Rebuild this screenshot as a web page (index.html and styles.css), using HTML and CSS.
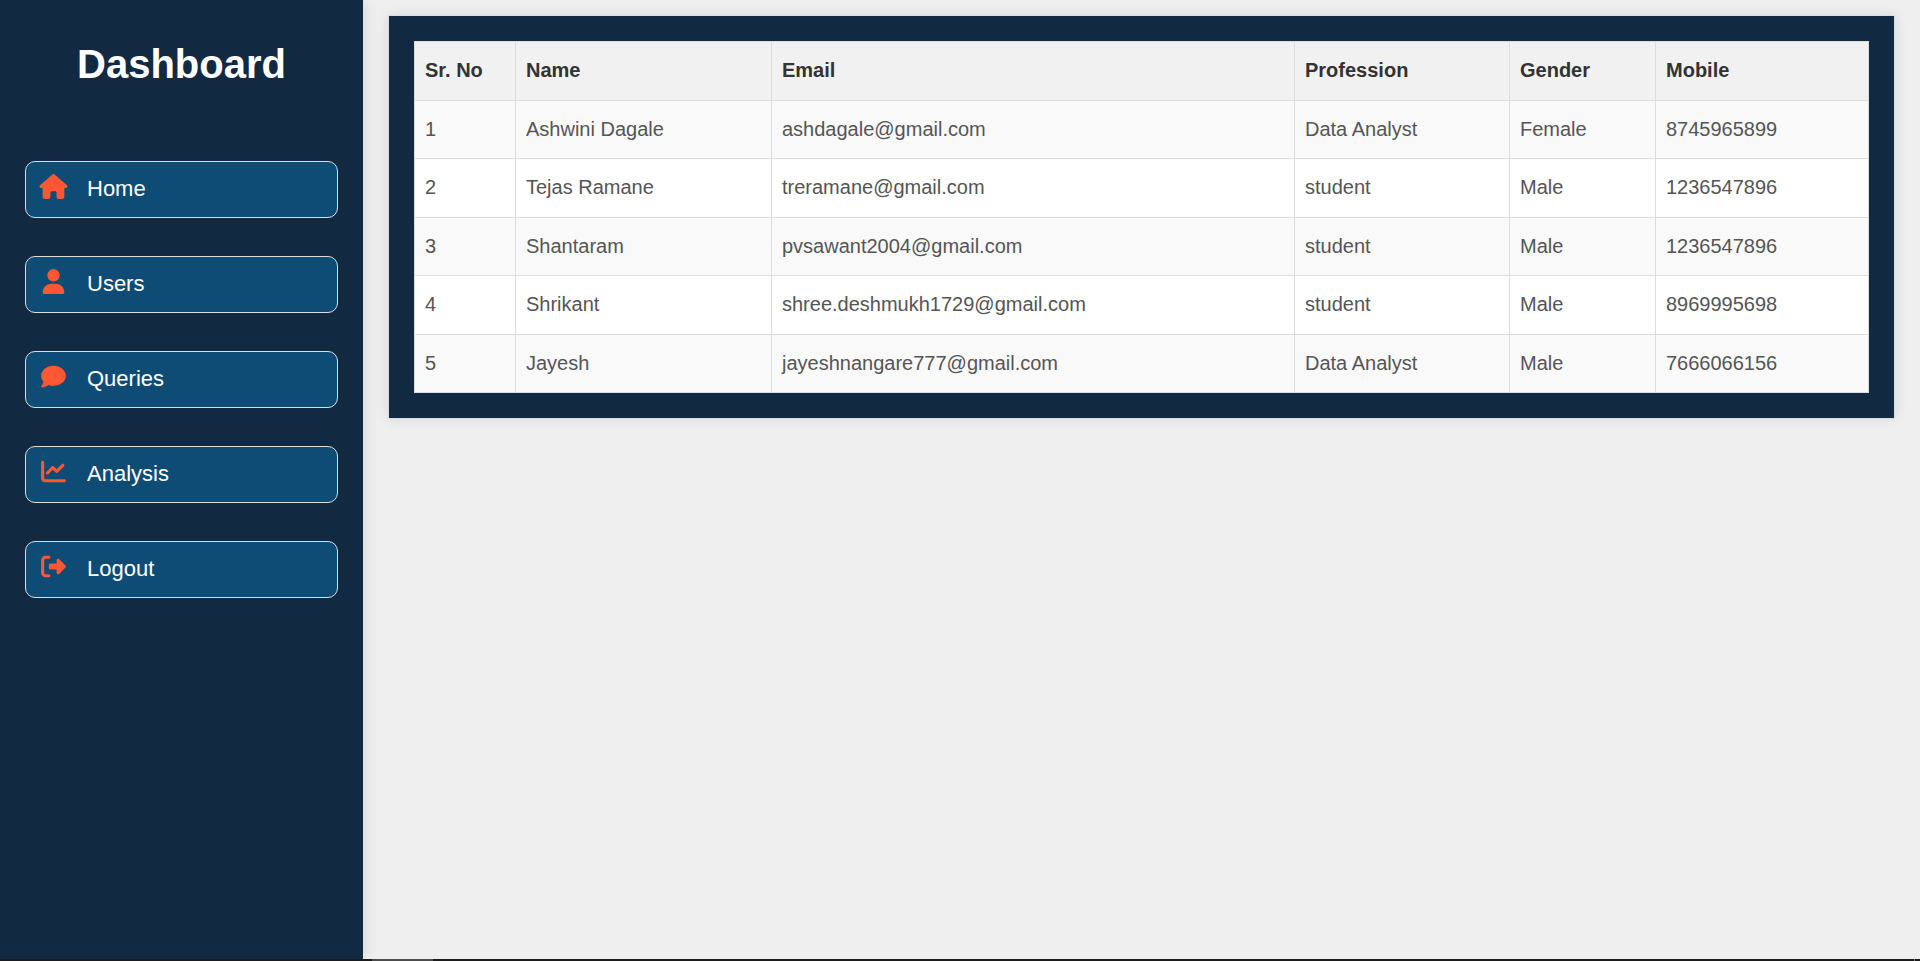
FILE: index.html
```html
<!DOCTYPE html>
<html lang="en">
<head>
<meta charset="utf-8">
<title>Dashboard</title>
<link rel="stylesheet" href="styles.css">
</head>
<body>
<div class="app">
  <aside class="sidebar">
    <h1 class="title">Dashboard</h1>
    <nav class="menu">
      <a class="item" href="#home"><svg class="icon" viewBox="-32 0 640 512" aria-hidden="true"><path d="M575.800 255.500c0 18-15 32.100-32 32.100h-32l.7 160.200c0 2.700-.2 5.400-.5 8.100V472c0 22.100-17.900 40-40 40H392c-22.100 0-40-17.900-40-40v-88c0-17.700-14.300-32-32-32h-64c-17.700 0-32 14.300-32 32v88c0 22.100-17.900 40-40 40h-80c-22.100 0-40-17.900-40-40V287.600H32c-18 0-32-14-32-32.100 0-9 3-17 10-24L266.400 8c7-7 15-8 22-8s15 2 21 7l255.400 224.500c8 7 12 15 11 24z"/></svg>Home</a>
      <a class="item" href="#users"><svg class="icon" viewBox="-96 0 640 512" aria-hidden="true"><path d="M224 256a128 128 0 1 0 0-256 128 128 0 1 0 0 256zm-45.700 48C79.800 304 0 383.800 0 482.300 0 498.700 13.300 512 29.700 512h388.600c16.400 0 29.700-13.300 29.700-29.700 0-98.500-79.800-178.300-178.300-178.300h-91.400z"/></svg>Users</a>
      <a class="item" href="#queries"><svg class="icon" viewBox="-64 0 640 512" aria-hidden="true"><path d="M512 240c0 114.900-114.600 208-256 208-37.100 0-72.300-6.400-104.100-17.900-11.900 8.700-31.300 20.600-54.300 30.600C73.600 471.100 44.700 480 16 480c-6.500 0-12.300-3.900-14.800-9.900s-1.100-12.800 3.400-17.400l.3-.3c.3-.3.7-.7 1.300-1.400 1.100-1.200 2.800-3.100 4.900-5.700 4.100-5 9.600-12.400 15.200-21.600 10-16.600 19.500-38.400 21.400-62.900C17.700 326.800 0 285.100 0 240 0 125.100 114.600 32 256 32s256 93.100 256 208z"/></svg>Queries</a>
      <a class="item" href="#analysis"><svg class="icon" viewBox="-64 0 640 512" aria-hidden="true"><path d="M64 64c0-17.700-14.300-32-32-32S0 46.300 0 64v336c0 44.200 35.800 80 80 80h400c17.700 0 32-14.300 32-32s-14.300-32-32-32H80c-8.800 0-16-7.200-16-16V64zm406.600 86.600c12.500-12.500 12.500-32.800 0-45.300s-32.800-12.500-45.300 0L320 210.700l-57.400-57.400c-12.500-12.500-32.800-12.500-45.300 0l-112 112c-12.500 12.500-12.500 32.800 0 45.300s32.800 12.500 45.300 0L240 221.300l57.400 57.400c12.500 12.500 32.800 12.500 45.300 0l128-128z"/></svg>Analysis</a>
      <a class="item" href="#logout"><svg class="icon" viewBox="-64 0 640 512" aria-hidden="true"><path d="M160 96c17.700 0 32-14.300 32-32s-14.300-32-32-32H96C43 32 0 75 0 128v256c0 53 43 96 96 96h64c17.700 0 32-14.300 32-32s-14.300-32-32-32H96c-17.700 0-32-14.300-32-32V128c0-17.700 14.300-32 32-32h64zm342.600 182.600c12.500-12.500 12.500-32.800 0-45.300l-128-128c-9.200-9.200-22.900-11.900-34.900-6.900S320 115.100 320 128v64H192c-17.700 0-32 14.300-32 32v64c0 17.700 14.300 32 32 32h128v64c0 12.900 7.800 24.600 19.800 29.600s25.700 2.200 34.900-6.900l128-128z"/></svg>Logout</a>
    </nav>
  </aside>
  <main class="content">
    <section class="panel">
      <table class="users">
        <colgroup><col class="col-no"><col class="col-name"><col><col class="col-profession"><col class="col-gender"><col class="col-mobile"></colgroup>
        <thead>
          <tr><th scope="col">Sr. No</th><th scope="col">Name</th><th scope="col">Email</th><th scope="col">Profession</th><th scope="col">Gender</th><th scope="col">Mobile</th></tr>
        </thead>
        <tbody>
          <tr><td>1</td><td>Ashwini Dagale</td><td>ashdagale@gmail.com</td><td>Data Analyst</td><td>Female</td><td>8745965899</td></tr>
          <tr><td>2</td><td>Tejas Ramane</td><td>treramane@gmail.com</td><td>student</td><td>Male</td><td>1236547896</td></tr>
          <tr><td>3</td><td>Shantaram</td><td>pvsawant2004@gmail.com</td><td>student</td><td>Male</td><td>1236547896</td></tr>
          <tr><td>4</td><td>Shrikant</td><td>shree.deshmukh1729@gmail.com</td><td>student</td><td>Male</td><td>8969995698</td></tr>
          <tr><td>5</td><td>Jayesh</td><td>jayeshnangare777@gmail.com</td><td>Data Analyst</td><td>Male</td><td>7666066156</td></tr>
        </tbody>
      </table>
    </section>
  </main>
</div>
<footer class="edge"><span class="edge-active"></span><span class="edge-mark"></span></footer>
</body>
</html>
```

FILE: styles.css
```css
* {
  box-sizing: border-box;
}

body {
  margin: 0;
  min-height: 100vh;
  display: flex;
  flex-direction: column;
  background: #efefef;
  font-family: "Liberation Sans", Arial, sans-serif;
}

.app {
  flex: 1;
  display: flex;
}

.sidebar {
  flex: none;
  width: 363px;
  padding: 40px 25px;
  background: #112a42;
  box-shadow: 2px 0 12px rgba(0, 0, 0, 0.1);
}

.title {
  margin: 0 0 73px;
  color: #fff;
  font-size: 40px;
  line-height: 48px;
  text-align: center;
}

.menu {
  display: flex;
  flex-direction: column;
  gap: 38px;
}

.item {
  display: flex;
  align-items: flex-start;
  gap: 18px;
  padding: 12px 12px 13px;
  border: 1px solid #ddd;
  border-radius: 10px;
  background: #0f4c75;
  color: #fff;
  font-size: 22px;
  line-height: 30px;
  text-decoration: none;
}

.icon {
  flex: none;
  width: 31px;
  height: 25px;
  fill: #ff5733;
}

.content {
  flex: 1;
  min-width: 0;
  padding: 15px 25px;
}

.panel {
  padding: 25px;
  border: 1px solid #ddd;
  background: #112a42;
  background-clip: padding-box;
  box-shadow: 0 0 12px rgba(0, 0, 0, 0.1);
}

.users {
  width: 100%;
  table-layout: fixed;
  border-collapse: collapse;
  background: #fff;
  font-size: 20px;
  line-height: 28px;
}

.col-no {
  width: 101px;
}

.col-name {
  width: 256px;
}

.col-profession {
  width: 215px;
}

.col-gender {
  width: 146px;
}

.col-mobile {
  width: 213px;
}

.users th,
.users td {
  height: 58px;
  padding: 0 10px 2px;
  border: 1px solid #ddd;
  color: #555;
  text-align: left;
}

.users th {
  height: 59px;
  background: #f1f1f1;
  color: #333;
}

.users tbody tr:nth-child(odd) {
  background: #f9f9f9;
}

.users tbody tr:nth-child(even) td {
  height: 59px;
}

.edge {
  display: flex;
  justify-content: space-between;
  height: 2px;
  padding: 0 5px 0 372px;
  background: #1c1c1c;
}

.edge-active {
  width: 61px;
  background: #4c4c4c;
}

.edge-mark {
  width: 1px;
  background: #777;
}
```
